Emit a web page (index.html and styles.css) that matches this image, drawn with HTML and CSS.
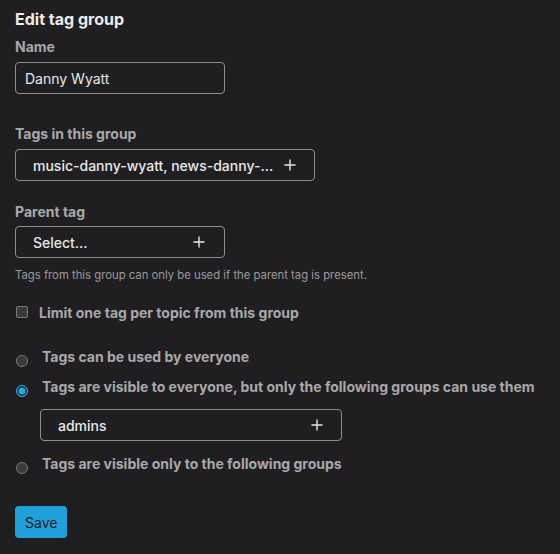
FILE: index.html
```html
<!DOCTYPE html>
<html>
<head>
<meta charset="utf-8">
<link rel="stylesheet" href="styles.css">
</head>
<body>
<div class="page">
  <h2 class="title">Edit tag group</h2>

  <div class="field f-name">
    <label class="label">Name</label>
    <div class="input">Danny Wyatt</div>
  </div>

  <div class="field f-tags">
    <label class="label">Tags in this group</label>
    <div class="select wide">
      <span class="sel-text">music-danny-wyatt, news-danny-...</span>
      <svg class="plus" viewBox="0 0 12 12" width="12" height="12"><path d="M6 0.5V11.5M0.5 6H11.5" stroke="#e6e6e6" stroke-width="1.4"/></svg>
    </div>
  </div>

  <div class="field f-parent">
    <label class="label">Parent tag</label>
    <div class="select narrow">
      <span class="sel-text">Select...</span>
      <svg class="plus" viewBox="0 0 12 12" width="12" height="12"><path d="M6 0.5V11.5M0.5 6H11.5" stroke="#e6e6e6" stroke-width="1.4"/></svg>
    </div>
    <div class="help">Tags from this group can only be used if the parent tag is present.</div>
  </div>

  <div class="check-row">
    <span class="checkbox"></span>
    <span class="check-label">Limit one tag per topic from this group</span>
  </div>

  <div class="radios">
    <div class="radio-row r1">
      <span class="radio"></span>
      <span class="radio-label">Tags can be used by everyone</span>
    </div>
    <div class="radio-row r2">
      <span class="radio checked"></span>
      <span class="radio-label">Tags are visible to everyone, but only the following groups can use them</span>
    </div>
    <div class="select groups">
      <span class="sel-text">admins</span>
      <svg class="plus" viewBox="0 0 12 12" width="12" height="12"><path d="M6 0.5V11.5M0.5 6H11.5" stroke="#e6e6e6" stroke-width="1.4"/></svg>
    </div>
    <div class="radio-row r3">
      <span class="radio"></span>
      <span class="radio-label">Tags are visible only to the following groups</span>
    </div>
  </div>

  <button class="save">Save</button>
</div>
</body>
</html>
```

FILE: styles.css
```css
* { box-sizing: border-box; }
html, body {
  margin: 0;
  background: #1f1f21;
  height: 100%;
}
body {
  font-family: Inter, "Noto Sans", sans-serif;
  color: #e6e6e6;
}
.page {
  padding: 9px 15px 0 15px;
}
.title {
  margin: 0;
  font-size: 16px;
  line-height: 20px;
  font-weight: 700;
  color: #ececec;
}
.field { display: flex; flex-direction: column; align-items: flex-start; }
.label {
  font-size: 14px;
  line-height: 18px;
  font-weight: 700;
  color: #a8a8a8;
}
.f-name { margin-top: 9px; }
.f-name .label { margin-bottom: 6px; }
.f-tags { margin-top: 31px; }
.f-tags .label { margin-bottom: 6px; }
.f-parent { margin-top: 22px; }
.f-parent .label { margin-bottom: 5px; }

.input {
  width: 210px;
  height: 32px;
  border: 1px solid #8c8c8c;
  border-radius: 4px;
  padding: 0 9px;
  display: flex;
  align-items: center;
  font-size: 14px;
  color: #e8e8e8;
}
.select {
  height: 32px;
  border: 1px solid #8c8c8c;
  border-radius: 4px;
  padding: 0 18px 0 17px;
  display: flex;
  align-items: center;
  justify-content: space-between;
  font-size: 14px;
  font-weight: 500;
  color: #e8e8e8;
}
.select.wide { width: 300px; }
.select.narrow { width: 210px; padding-right: 19px; }
.select.groups { width: 302px; margin: 12px 0 0 25px; padding-right: 18px; }
.plus { flex: none; display: block; }
.help {
  margin-top: 9px;
  font-size: 11.3px;
  line-height: 16px;
  color: #9a9a9a;
}
.check-row {
  margin-top: 20px;
  display: flex;
  align-items: center;
  height: 18px;
}
.checkbox {
  width: 12px;
  height: 12px;
  margin-left: 1px;
  border: 1px solid #7a7a7a;
  border-radius: 2px;
  background: #3a3a3c;
  flex: none;
}
.check-label {
  margin-left: 11px;
  font-size: 14px;
  font-weight: 700;
  color: #a8a8a8;
}
.radios { margin-top: 27px; }
.radio-row {
  display: flex;
  align-items: flex-start;
  line-height: 18px;
}
.r2 { margin-top: 11px; }
.r3 { margin-top: 14px; }
.radio {
  width: 12px;
  height: 12px;
  margin: 7px 0 0 1px;
  border-radius: 50%;
  border: 1px solid #7a7a7a;
  background: #3a3a3c;
  flex: none;
}
.radio.checked {
  border: 1px solid #2aa8e0;
  background: #2aa8e0;
  box-shadow: inset 0 0 0 1.5px #1f1f21;
}
.radio-label {
  margin-left: 14px;
  font-size: 14px;
  font-weight: 700;
  color: #a8a8a8;
}
.save {
  margin-top: 32px;
  display: block;
  height: 32px;
  padding: 0 10px;
  border: none;
  border-radius: 4px;
  background: #1fa0da;
  color: #1f1f21;
  font-family: Inter, "Noto Sans", sans-serif;
  font-size: 14px;
}
```
